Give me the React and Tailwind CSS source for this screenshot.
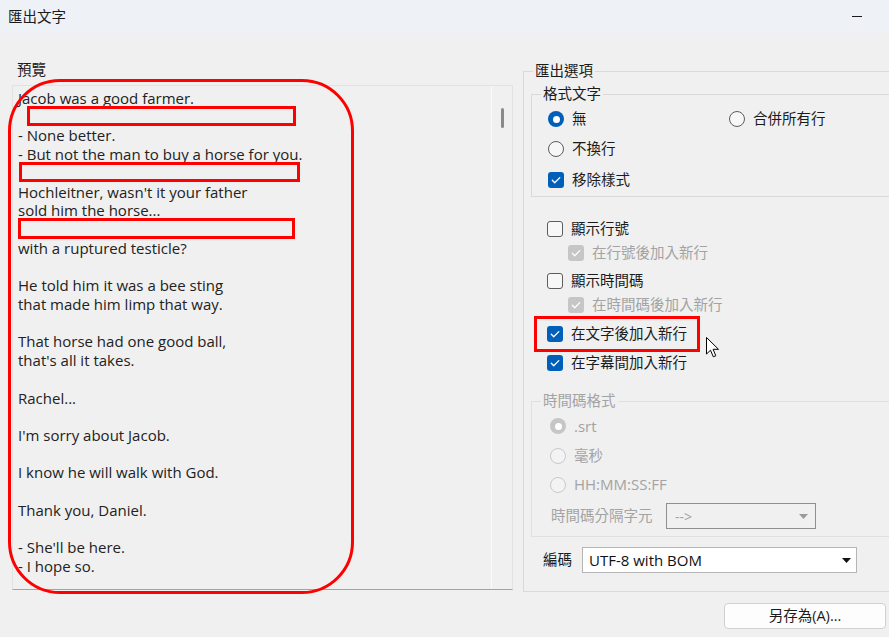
import React from "react";

const LINES = [
  "Jacob was a good farmer.",
  "",
  "- None better.",
  "- But not the man to buy a horse for you.",
  "",
  "Hochleitner, wasn't it your father",
  "sold him the horse...",
  "",
  "with a ruptured testicle?",
  "",
  "He told him it was a bee sting",
  "that made him limp that way.",
  "",
  "That horse had one good ball,",
  "that's all it takes.",
  "",
  "Rachel...",
  "",
  "I'm sorry about Jacob.",
  "",
  "I know he will walk with God.",
  "",
  "Thank you, Daniel.",
  "",
  "- She'll be here.",
  "- I hope so.",
];

function Check() {
  return (
    <svg width="16" height="16" viewBox="0 0 16 16" className="block">
      <path d="M4.3 8.3l2.4 2.4L11.8 5.6" fill="none" stroke="#ffffff" strokeWidth="1.3" strokeLinecap="round" strokeLinejoin="round" />
    </svg>
  );
}

function Checkbox({ checked, disabled }) {
  if (checked && disabled) {
    return (
      <div className="w-[16px] h-[16px] rounded-[3px] bg-[#c6c6c6] shrink-0">
        <Check />
      </div>
    );
  }
  if (checked) {
    return (
      <div className="w-[16px] h-[16px] rounded-[3px] bg-[#005fb8] shrink-0">
        <Check />
      </div>
    );
  }
  return <div className="w-[16px] h-[16px] rounded-[3px] border border-[#5d5d5d] bg-[#f7f7f7] shrink-0" />;
}

function Radio({ checked, disabled }) {
  if (checked && disabled) {
    return (
      <div className="w-[16px] h-[16px] rounded-full bg-[#c6c6c6] flex items-center justify-center shrink-0">
        <div className="w-[7px] h-[7px] rounded-full bg-white" />
      </div>
    );
  }
  if (checked) {
    return (
      <div className="w-[16px] h-[16px] rounded-full bg-[#005fb8] flex items-center justify-center shrink-0">
        <div className="w-[7px] h-[7px] rounded-full bg-white" />
      </div>
    );
  }
  if (disabled) {
    return <div className="w-[16px] h-[16px] rounded-full border border-[#c9c9c9] bg-[#f3f3f3] shrink-0" />;
  }
  return <div className="w-[16px] h-[16px] rounded-full border border-[#5d5d5d] bg-[#f7f7f7] shrink-0" />;
}

export default function App() {
  return (
    <div className="relative w-[889px] h-[637px] overflow-hidden bg-[#f0f0f0] flex flex-col text-[#1b1b1b] font-['Open_Sans','Noto_Sans_CJK_TC',sans-serif]">
      {/* title bar */}
      <div className="h-[33px] bg-[#eef2f7] flex items-center justify-between pl-[8px] pr-[27px] shrink-0">
        <span className="text-[14.5px] leading-[20px]">匯出文字</span>
        <div className="w-[10px] h-[1px] bg-[#1b1b1b]" />
      </div>

      {/* body */}
      <div className="flex pl-[12px] pt-[27px]">
        {/* left: preview */}
        <div className="w-[501px] flex flex-col shrink-0">
          <div className="h-[20px] leading-[20px] text-[14.5px] pl-[5px]">預覽</div>
          <div className="mt-[5px] h-[505px] flex border border-[#e2e2e2] border-b-[#a3a3a3] bg-[#f0f0f0]">
            <div className="flex-1 pl-[5px] pt-[3px] text-[15px] leading-[18.72px] whitespace-pre-line text-[#222222] overflow-hidden">
              {LINES.join("\n")}
            </div>
            <div className="w-[21px] border-l border-[#fbfbfb] flex justify-center">
              <div className="mt-[22px] w-[3px] h-[20px] rounded-full bg-[#8a8a8a]" />
            </div>
          </div>
        </div>

        {/* right: options */}
        <div className="ml-[10px] flex flex-col shrink-0 w-[400px]">
          <fieldset className="border border-[#d9d9d9] w-[400px] m-0 p-0 min-w-0">
            <legend className="ml-[9px] px-[2px] text-[14.5px] leading-[22px]">匯出選項</legend>
            <div className="pl-[7px] pt-[2px] pb-[18px] flex flex-col">
              {/* 格式文字 */}
              <fieldset className="border border-[#d9d9d9] w-[380px] m-0 p-0 min-w-0">
                <legend className="ml-[9px] px-[2px] text-[14.5px] leading-[20px]">格式文字</legend>
                <div className="pl-[16px] pb-[1px] flex flex-col">
                  <div className="h-[30px] flex items-center">
                    <div className="w-[181px] flex items-center gap-[8px]">
                      <Radio checked />
                      <span className="text-[14.5px]">無</span>
                    </div>
                    <div className="flex items-center gap-[8px]">
                      <Radio />
                      <span className="text-[14.5px]">合併所有行</span>
                    </div>
                  </div>
                  <div className="h-[30px] flex items-center gap-[8px]">
                    <Radio />
                    <span className="text-[14.5px]">不換行</span>
                  </div>
                  <div className="h-[31px] flex items-center gap-[8px]">
                    <Checkbox checked />
                    <span className="text-[14.5px]">移除樣式</span>
                  </div>
                </div>
              </fieldset>

              {/* checkboxes */}
              <div className="flex flex-col pt-[20px]">
                <div className="h-[24px] pl-[16px] flex items-center gap-[8px]">
                  <Checkbox />
                  <span className="text-[14.5px]">顯示行號</span>
                </div>
                <div className="h-[24px] pl-[37px] flex items-center gap-[8px]">
                  <Checkbox checked disabled />
                  <span className="text-[14.5px] text-[#a3a3a3]">在行號後加入新行</span>
                </div>
                <div className="h-[24px] mt-[4px] pl-[16px] flex items-center gap-[8px]">
                  <Checkbox />
                  <span className="text-[14.5px]">顯示時間碼</span>
                </div>
                <div className="h-[24px] pl-[37px] flex items-center gap-[8px]">
                  <Checkbox checked disabled />
                  <span className="text-[14.5px] text-[#a3a3a3]">在時間碼後加入新行</span>
                </div>
                <div className="h-[24px] mt-[5px] pl-[16px] flex items-center gap-[8px]">
                  <Checkbox checked />
                  <span className="text-[14.5px]">在文字後加入新行</span>
                </div>
                <div className="h-[24px] mt-[5px] pl-[16px] flex items-center gap-[8px]">
                  <Checkbox checked />
                  <span className="text-[14.5px]">在字幕間加入新行</span>
                </div>
              </div>

              {/* 時間碼格式 */}
              <fieldset className="mt-[16px] border border-[#e0e0e0] w-[380px] m-0 p-0 min-w-0">
                <legend className="ml-[9px] px-[2px] text-[14.5px] leading-[20px] text-[#a3a3a3]">時間碼格式</legend>
                <div className="pl-[18px] pb-[7px] flex flex-col text-[#a3a3a3]">
                  <div className="h-[30px] flex items-center gap-[8px]">
                    <Radio checked disabled />
                    <span className="text-[15px]">.srt</span>
                  </div>
                  <div className="h-[29px] flex items-center gap-[8px]">
                    <Radio disabled />
                    <span className="text-[14.5px]">毫秒</span>
                  </div>
                  <div className="h-[29px] flex items-center gap-[8px]">
                    <Radio disabled />
                    <span className="text-[15px]">HH:MM:SS:FF</span>
                  </div>
                  <div className="mt-[4px] flex items-center">
                    <span className="w-[116px] pl-[1px] text-[14.5px]">時間碼分隔字元</span>
                    <div className="w-[150px] h-[26px] border border-[#8f8f8f] bg-[#f0f0f0] flex items-center justify-between pl-[8px] pr-[7px]">
                      <span className="text-[14px]">--&gt;</span>
                      <svg width="9" height="5" viewBox="0 0 9 5"><path d="M0 0h9L4.5 5z" fill="#9a9a9a" /></svg>
                    </div>
                  </div>
                </div>
              </fieldset>

              {/* 編碼 */}
              <div className="mt-[10px] flex items-center pl-[12px]">
                <span className="w-[39px] text-[14.5px]">編碼</span>
                <div className="w-[275px] h-[26px] border border-[#b5b5b5] bg-white flex items-center justify-between pl-[6px] pr-[5px]">
                  <span className="text-[15px] text-[#111111]">UTF-8 with BOM</span>
                  <svg width="9" height="5" viewBox="0 0 9 5"><path d="M0 0h9L4.5 5z" fill="#111111" /></svg>
                </div>
              </div>
            </div>
          </fieldset>

          <div className="mt-[11px] ml-[201px] w-[162px] h-[26px] rounded-[4px] border border-[#d0d0d0] bg-[#fdfdfd] flex items-center justify-center">
            <span className="text-[14.5px] text-[#1b1b1b]">另存為(A)...</span>
          </div>
        </div>
      </div>

      {/* red annotations */}
      <div className="absolute left-[8px] top-[79px] w-[346px] h-[515px] border-[3px] border-[#ff0000] rounded-[52px] pointer-events-none" />
      <div className="absolute left-[27px] top-[106px] w-[269px] h-[20px] border-[3px] border-[#ff0000] pointer-events-none" />
      <div className="absolute left-[19px] top-[162px] w-[281px] h-[20px] border-[3px] border-[#ff0000] pointer-events-none" />
      <div className="absolute left-[18px] top-[218px] w-[277px] h-[21px] border-[3px] border-[#ff0000] pointer-events-none" />
      <div className="absolute left-[534px] top-[316px] w-[166px] h-[36px] border-[3px] border-[#ff0000] pointer-events-none" />

      {/* mouse cursor */}
      <svg className="absolute left-[706px] top-[337px] pointer-events-none" width="16" height="24" viewBox="0 0 16 24">
        <path d="M0.5 0.5 L0.5 17 L4.5 13.2 L7.3 19.8 L9.8 18.8 L7.1 12.3 L12.5 12.3 Z" fill="#ffffff" stroke="#000000" strokeWidth="1" strokeLinejoin="miter" />
      </svg>
    </div>
  );
}
